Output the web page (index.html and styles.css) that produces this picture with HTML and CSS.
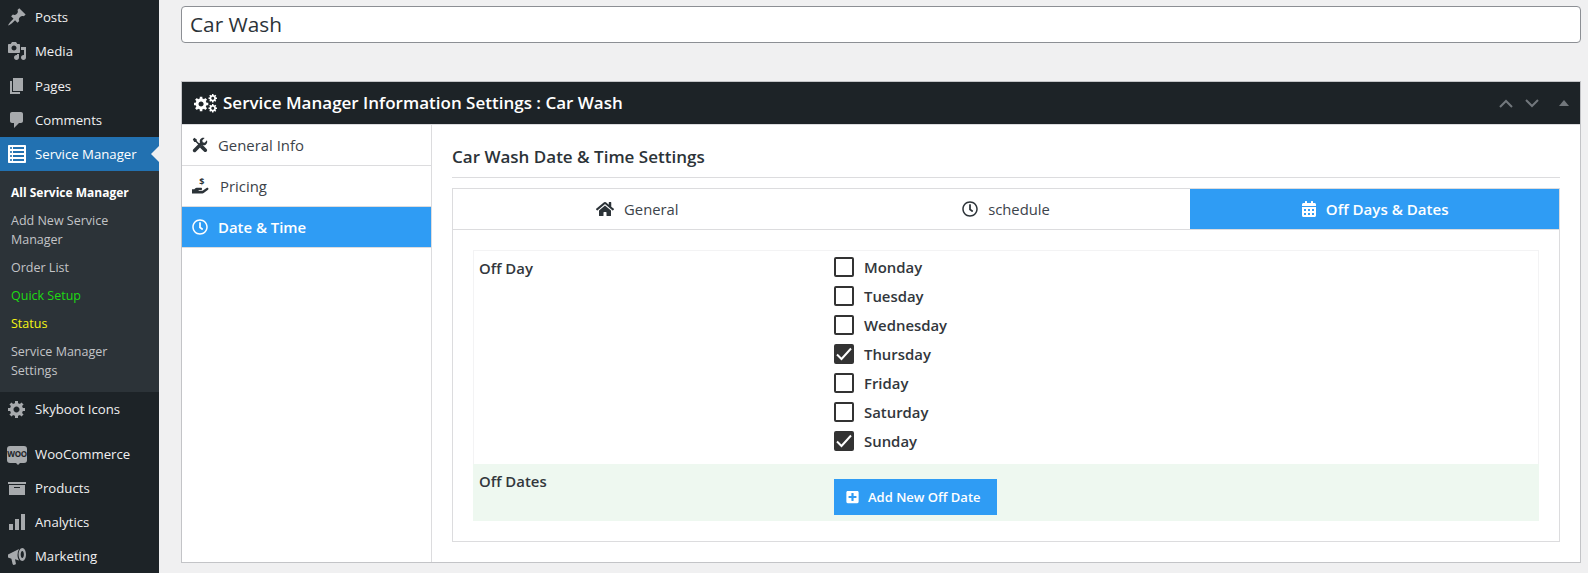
FILE: index.html
```html
<!DOCTYPE HTML>

<html>
	<head>
		<title>Car Wash</title>
		<link rel="stylesheet" href="styles.css">
	</head>
	<body>
		<svg class="defs" width="0" height="0">
			<defs>
				<symbol id="i-pin" viewBox="0 0 20 20"><path d="M10.44 3.02l1.82-1.82 6.36 6.35-1.83 1.82c-1.05-.68-2.48-.57-3.41.36l-.75.75c-.92.93-1.04 2.35-.35 3.41l-1.83 1.82-2.41-2.41-2.8 2.79c-.42.42-3.38 2.71-3.8 2.29s1.86-3.39 2.28-3.81l2.79-2.79L4.1 9.36l1.83-1.82c1.05.69 2.48.57 3.4-.36l.75-.75c.93-.92 1.05-2.35.36-3.41z"/></symbol>
				<symbol id="i-media" viewBox="0 0 20 20"><path d="M13 11V4c0-.55-.45-1-1-1h-1.67L9 1H5L3.67 3H2c-.55 0-1 .45-1 1v7c0 .55.45 1 1 1h10c.55 0 1-.45 1-1zM7 4.500c1.380 0 2.500 1.120 2.500 2.500S8.380 9.500 7 9.500 4.500 8.380 4.500 7 5.620 4.500 7 4.500zM14 6h5v10.500c0 1.380-1.120 2.500-2.500 2.500S14 17.880 14 16.500s1.120-2.500 2.500-2.500c.17 0 .34.02.5.05V9h-3V6zm-4 8.050V13h2v3.500c0 1.380-1.120 2.500-2.500 2.500S7 17.880 7 16.500 8.120 14 9.500 14c.17 0 .34.02.5.05z"/></symbol>
				<symbol id="i-page" viewBox="0 0 20 20"><path d="M6 15V2h10v13H6zm-1 1h8v2H3V5h2v11z"/></symbol>
				<symbol id="i-comment" viewBox="0 0 20 20"><path d="M5 2h9c1.100 0 2 .9 2 2v7c0 1.100-.9 2-2 2h-2l-5 5v-5H5c-1.100 0-2-.9-2-2V4c0-1.100.9-2 2-2z"/></symbol>
				<symbol id="i-list" viewBox="0 0 20 20"><path d="M2 19h16c.55 0 1-.45 1-1V2c0-.55-.45-1-1-1H2c-.55 0-1 .45-1 1v16c0 .55.45 1 1 1zM4 3c.55 0 1 .45 1 1s-.45 1-1 1-1-.45-1-1 .45-1 1-1zm13 0v2H6V3h11zM4 7c.55 0 1 .45 1 1s-.45 1-1 1-1-.45-1-1 .45-1 1-1zm13 0v2H6V7h11zM4 11c.55 0 1 .45 1 1s-.45 1-1 1-1-.45-1-1 .45-1 1-1zm13 0v2H6v-2h11zM4 15c.55 0 1 .45 1 1s-.45 1-1 1-1-.45-1-1 .45-1 1-1zm13 0v2H6v-2h11z"/></symbol>
				<symbol id="i-gear" viewBox="0 0 20 20"><path d="M18 12h-2.180c-.17.7-.44 1.350-.81 1.930l1.540 1.540-2.100 2.100-1.540-1.540c-.58.36-1.230.63-1.910.79V19H8v-2.180c-.68-.16-1.330-.43-1.910-.79l-1.540 1.540-2.120-2.120 1.540-1.540c-.36-.58-.63-1.230-.79-1.910H1V9.030h2.170c.16-.7.44-1.350.8-1.940L2.430 5.550l2.100-2.100 1.540 1.540c.58-.37 1.240-.64 1.930-.81V2h3v2.180c.68.16 1.330.43 1.910.79l1.540-1.540 2.120 2.120-1.540 1.540c.36.59.64 1.240.8 1.940H18V12zm-8.500 1.500c1.660 0 3-1.340 3-3s-1.340-3-3-3-3 1.340-3 3 1.340 3 3 3z"/></symbol>
				<symbol id="i-archive" viewBox="0 0 20 20"><path d="M19 4v2H1V4h18zM2 7h16v10H2V7zm11 3V9H7v1h6z"/></symbol>
				<symbol id="i-chart" viewBox="0 0 20 20"><path d="M18 18V2h-4v16h4zm-6 0V7H8v11h4zm-6 0v-6H2v6h4z"/></symbol>
				<symbol id="i-mega" viewBox="0 0 20 20"><path d="M1 8.500l11-5.500c-1 2-1.500 4-1.500 6s.6 4 1.700 5.500L8 13.300l.9 4.200c.1.600-.2 1-.8 1.100l-1.300.3c-.6.1-1-.2-1.200-.8l-1.200-5.400L1 11.500z"/><path fill-rule="evenodd" d="M15.300 2c2 0 3.700 2.900 3.700 6.500S17.300 15 15.300 15s-3.700-2.900-3.700-6.500S13.300 2 15.300 2zm0 3c-.9 0-1.600 1.600-1.600 3.500s.7 3.500 1.600 3.500 1.600-1.600 1.600-3.500-.7-3.500-1.600-3.500z"/></symbol>
				<symbol id="i-clock" viewBox="0 0 512 512"><path d="M256 8C119 8 8 119 8 256s111 248 248 248 248-111 248-248S393 8 256 8zm0 448c-110.500 0-200-89.500-200-200S145.500 56 256 56s200 89.500 200 200-89.500 200-200 200zm61.800-104.400l-84.900-61.700c-3.100-2.300-4.900-5.900-4.900-9.700V116c0-6.600 5.400-12 12-12h32c6.600 0 12 5.400 12 12v141.700l66.800 48.600c5.400 3.900 6.500 11.400 2.600 16.800L334.600 349c-3.900 5.300-11.400 6.500-16.800 2.600z"/></symbol>
				<symbol id="i-home" viewBox="0 0 576 512"><path d="M280.370 148.260L96 300.110V464a16 16 0 0 0 16 16l112.060-.29a16 16 0 0 0 15.920-16V368a16 16 0 0 1 16-16h64a16 16 0 0 1 16 16v95.640a16 16 0 0 0 16 16.050L464 480a16 16 0 0 0 16-16V300L295.670 148.260a12.190 12.190 0 0 0-15.300 0zM571.600 251.470L488 182.560V44.050a12 12 0 0 0-12-12h-56a12 12 0 0 0-12 12v72.610L318.470 43a48 48 0 0 0-61 0L4.340 251.470a12 12 0 0 0-1.600 16.900l25.500 31A12 12 0 0 0 45.150 301l235.220-193.740a12.190 12.190 0 0 1 15.300 0L530.900 301a12 12 0 0 0 16.900-1.600l25.500-31a12 12 0 0 0-1.700-16.930z"/></symbol>
				<symbol id="i-cal" viewBox="0 0 448 512"><path d="M0 464c0 26.500 21.500 48 48 48h352c26.500 0 48-21.500 48-48V192H0v272zm320-196c0-6.600 5.400-12 12-12h40c6.600 0 12 5.400 12 12v40c0 6.600-5.400 12-12 12h-40c-6.600 0-12-5.400-12-12v-40zm0 128c0-6.600 5.400-12 12-12h40c6.600 0 12 5.400 12 12v40c0 6.600-5.400 12-12 12h-40c-6.600 0-12-5.400-12-12v-40zM192 268c0-6.600 5.400-12 12-12h40c6.600 0 12 5.400 12 12v40c0 6.600-5.400 12-12 12h-40c-6.600 0-12-5.400-12-12v-40zm0 128c0-6.600 5.400-12 12-12h40c6.600 0 12 5.400 12 12v40c0 6.600-5.400 12-12 12h-40c-6.600 0-12-5.400-12-12v-40zM64 268c0-6.600 5.400-12 12-12h40c6.600 0 12 5.400 12 12v40c0 6.600-5.400 12-12 12H76c-6.600 0-12-5.400-12-12v-40zm0 128c0-6.600 5.400-12 12-12h40c6.600 0 12 5.400 12 12v40c0 6.600-5.400 12-12 12H76c-6.600 0-12-5.400-12-12v-40zM400 64h-48V16c0-8.800-7.200-16-16-16h-32c-8.800 0-16 7.200-16 16v48H160V16c0-8.800-7.200-16-16-16h-32c-8.800 0-16 7.200-16 16v48H48C21.500 64 0 85.500 0 112v48h448v-48c0-26.500-21.500-48-48-48z"/></symbol>
				<symbol id="i-plus" viewBox="0 0 448 512"><path d="M400 32H48C21.500 32 0 53.500 0 80v352c0 26.500 21.500 48 48 48h352c26.500 0 48-21.500 48-48V80c0-26.500-21.500-48-48-48zm-32 252c0 6.600-5.400 12-12 12h-92v92c0 6.600-5.400 12-12 12h-56c-6.600 0-12-5.400-12-12v-92H92c-6.600 0-12-5.400-12-12v-56c0-6.600 5.400-12 12-12h92v-92c0-6.600 5.400-12 12-12h56c6.600 0 12 5.400 12 12v92h92c6.600 0 12 5.400 12 12v56z"/></symbol>
				<symbol id="i-tools" viewBox="0 0 20 20"><path d="M2.800 1L6 3.200V5l5.600 5.600-1.400 1.400L4.600 6.400H2.900L1 3z"/><path d="M13 9.800l5.200 5.200c.9.900.9 2.300 0 3.200s-2.300.9-3.200 0L9.800 13z"/><path d="M18.700 4.200l-2.900 2.900-2.400-.5-.5-2.400L15.800 1.300c-2-.8-4.300-.2-5.400 1.600-.8 1.200-.9 2.700-.4 4L1.700 15.200c-.9.900-.9 2.200 0 3.100s2.200.9 3.100 0l8.300-8.300c1.300.5 2.800.4 4-.4 1.800-1.100 2.400-3.400 1.600-5.400z"/></symbol>
				<symbol id="i-hand" viewBox="0 0 20 20"><path d="M0 13.500h2.600c1-.9 2.200-1.500 3.500-1.500h3.700c.9 0 1.400.5 1.400 1.200 0 .8-.6 1.300-1.400 1.300H7.400v.8h4.300l4.500-3c.7-.4 1.500-.3 1.900.2.400.6.300 1.300-.3 1.800l-4.800 3.600c-.4.300-.8.400-1.300.4H0z"/><text class="iconDollar" x="8" y="9">$</text></symbol>
			</defs>
		</svg>

		<div class="wrap">
			<ul class="menu">
				<li class="menuItem"><svg class="menuIcon"><use href="#i-pin"/></svg>Posts</li>
				<li class="menuItem"><svg class="menuIcon"><use href="#i-media"/></svg>Media</li>
				<li class="menuItem"><svg class="menuIcon"><use href="#i-page"/></svg>Pages</li>
				<li class="menuItem"><svg class="menuIcon"><use href="#i-comment"/></svg>Comments</li>
				<li class="menuItem current"><svg class="menuIcon"><use href="#i-list"/></svg>Service Manager</li>
				<li class="subMenu">
					<div class="subItem subCurrent">All Service Manager</div>
					<div class="subItem">Add New Service Manager</div>
					<div class="subItem">Order List</div>
					<div class="subItem subGreen">Quick Setup</div>
					<div class="subItem subYellow">Status</div>
					<div class="subItem">Service Manager Settings</div>
				</li>
				<li class="menuItem"><svg class="menuIcon"><use href="#i-gear"/></svg>Skyboot Icons</li>
				<li class="menuItem menuGap"><span class="wooIcon">woo</span>WooCommerce</li>
				<li class="menuItem"><svg class="menuIcon"><use href="#i-archive"/></svg>Products</li>
				<li class="menuItem"><svg class="menuIcon"><use href="#i-chart"/></svg>Analytics</li>
				<li class="menuItem"><svg class="menuIcon"><use href="#i-mega"/></svg>Marketing</li>
			</ul>

			<div class="content">
				<div class="titleBox">Car Wash</div>

				<div class="metaBox">
					<div class="metaHead">
						<svg class="cogs" viewBox="0 0 24 20"><use href="#i-gear" x="-1" y="2" width="17" height="17"/><use href="#i-gear" x="14" y="0" width="10" height="10"/><use href="#i-gear" x="14" y="10" width="10" height="10"/></svg>
						<span class="metaTitle">Service Manager Information Settings : Car Wash</span>
						<svg class="arrow" viewBox="0 0 14 9"><path d="M1 8l6-6 6 6"/></svg>
						<svg class="arrow" viewBox="0 0 14 9"><path d="M1 1l6 6 6-6"/></svg>
						<span class="toggle"></span>
					</div>
					<div class="metaBody">
						<div class="sideNav">
							<div class="navItem"><svg class="navIcon"><use href="#i-tools"/></svg>General Info</div>
							<div class="navItem"><svg class="navIcon navHand"><use href="#i-hand"/></svg>Pricing</div>
							<div class="navItem navActive"><svg class="navIcon"><use href="#i-clock"/></svg>Date &amp; Time</div>
						</div>
						<div class="panel">
							<div class="panelTitle">Car Wash Date &amp; Time Settings</div>
							<div class="tabBox">
								<div class="tabs">
									<div class="tab"><svg class="tabIcon tabHome"><use href="#i-home"/></svg>General</div>
									<div class="tab"><svg class="tabIcon"><use href="#i-clock"/></svg>schedule</div>
									<div class="tab tabActive"><svg class="tabIcon"><use href="#i-cal"/></svg>Off Days &amp; Dates</div>
								</div>
								<div class="tabBody">
									<div class="formRow">
										<div class="formLabel">Off Day</div>
										<div class="days">
											<div class="day"><span class="check"></span>Monday</div>
											<div class="day"><span class="check"></span>Tuesday</div>
											<div class="day"><span class="check"></span>Wednesday</div>
											<div class="day"><span class="check checked"><svg viewBox="0 0 20 20"><path d="M3 10.500l4.500 4.500L17 4.500"/></svg></span>Thursday</div>
											<div class="day"><span class="check"></span>Friday</div>
											<div class="day"><span class="check"></span>Saturday</div>
											<div class="day"><span class="check checked"><svg viewBox="0 0 20 20"><path d="M3 10.500l4.500 4.500L17 4.500"/></svg></span>Sunday</div>
										</div>
									</div>
									<div class="formRow formGreen">
										<div class="formLabel">Off Dates</div>
										<div class="formField">
											<button class="addButton"><svg class="addIcon"><use href="#i-plus"/></svg>Add New Off Date</button>
										</div>
									</div>
								</div>
							</div>
						</div>
					</div>
				</div>
			</div>
		</div>
	</body>
</html>
```

FILE: styles.css
```css
html, body
{
	margin: 0;
	height: 573px;
	overflow: hidden;
}
body
{
	background-color: #f0f0f1;
	color: #2c3338;
	font-family: "Open Sans", "Noto Sans", sans-serif;
	font-size: 13px;
}
svg.defs
{
	display: block;
	height: 0;
}
div.wrap
{
	display: flex;
	height: 573px;
}

/* admin menu */
ul.menu
{
	list-style: none;
	margin: 0;
	padding: 0;
	width: 159px;
	flex: none;
	background-color: #1d2327;
	color: #f0f0f1;
}
li.menuItem
{
	display: flex;
	align-items: center;
	height: 34px;
	font-size: 13.2px;
}
li.menuItem:nth-child(3)
{
	height: 35px;
}
li.menuGap
{
	margin-top: 11px;
}
li.current
{
	position: relative;
	background-color: #2271b1;
	color: white;
}
li.current::after
{
	content: "";
	position: absolute;
	right: 0;
	top: 9px;
	border: 8px solid transparent;
	border-right-color: #f0f0f1;
	border-left-width: 0;
}
svg.menuIcon
{
	width: 20px;
	height: 20px;
	margin: 0 8px 0 7px;
	fill: #a7aaad;
	flex: none;
}
li.current svg.menuIcon
{
	fill: white;
}
span.wooIcon
{
	position: relative;
	width: 20px;
	height: 17px;
	margin: 0 8px 0 7px;
	flex: none;
	background-color: #a7aaad;
	border-radius: 3px;
	color: #1d2327;
	font-size: 8px;
	font-weight: 700;
	line-height: 16px;
	text-align: center;
	text-transform: uppercase;
	letter-spacing: -0.4px;
}
span.wooIcon::after
{
	content: "";
	position: absolute;
	left: 9px;
	bottom: -2px;
	border: 2px solid transparent;
	border-top-color: #a7aaad;
	border-bottom-width: 0;
}
li.subMenu
{
	background-color: #2c3338;
	padding: 7px 0 8px;
}
div.subItem
{
	color: #c3c4c7;
	font-size: 12.5px;
	line-height: 19px;
	padding: 4.5px 12px 4.5px 11px;
}
div.subCurrent
{
	color: white;
	font-size: 12px;
	font-weight: 700;
}
div.subGreen
{
	color: #1edb12;
}
div.subYellow
{
	color: #f5f513;
}

/* main column */
div.content
{
	flex: 1;
	padding: 6px 7px 0 22px;
}
div.titleBox
{
	height: 35px;
	line-height: 35px;
	padding: 0 8px;
	background-color: white;
	border: 1px solid #8c8f94;
	border-radius: 4px;
	font-size: 20.8px;
}
div.metaBox
{
	margin-top: 38px;
	height: 480px;
	border: 1px solid #c3c4c7;
	background-color: white;
	display: flex;
	flex-direction: column;
}
div.metaHead
{
	display: flex;
	align-items: center;
	height: 42px;
	flex: none;
	padding: 0 11px 0 12px;
	background-color: #1d2327;
	color: white;
}
svg.cogs
{
	width: 24px;
	height: 20px;
	margin-right: 5px;
	fill: white;
}
span.metaTitle
{
	flex: 1;
	padding-bottom: 2px;
	font-size: 17px;
	font-weight: 600;
}
svg.arrow
{
	width: 14px;
	height: 9px;
	margin-right: 12px;
	fill: none;
	stroke: #72777c;
	stroke-width: 2;
}
span.toggle
{
	margin-left: 8px;
	border: 5px solid transparent;
	border-top-width: 0;
	border-bottom: 6px solid #72777c;
}
div.metaBody
{
	flex: 1;
	display: flex;
	border-top: 1px solid #dcdcde;
}

/* left nav */
div.sideNav
{
	width: 249px;
	flex: none;
	border-right: 1px solid #dcdcde;
}
div.navItem
{
	display: flex;
	align-items: center;
	height: 40px;
	padding-left: 10px;
	border-bottom: 1px solid #dcdcde;
	font-size: 14.9px;
	color: #3c434a;
}
div.navActive
{
	background-color: #2f9cf4;
	color: white;
	font-weight: 600;
}
svg.navIcon
{
	width: 16px;
	height: 16px;
	margin-right: 10px;
	fill: #2c3338;
	flex: none;
}
svg.navHand
{
	width: 18px;
	height: 18px;
	margin-right: 10px;
}
div.navActive svg.navIcon
{
	fill: white;
}
text.iconDollar
{
	font-size: 10px;
	font-weight: 700;
}

/* right panel */
div.panel
{
	flex: 1;
	padding: 20px 20px 0 20px;
}
div.panelTitle
{
	height: 32px;
	border-bottom: 1px solid #dcdcde;
	font-size: 17px;
	font-weight: 600;
	line-height: 24px;
	color: #2c3338;
}
div.tabBox
{
	margin-top: 10px;
	border: 1px solid #dcdcde;
}
div.tabs
{
	display: flex;
	height: 40px;
	border-bottom: 1px solid #dcdcde;
}
div.tab
{
	flex: 1;
	display: flex;
	align-items: center;
	justify-content: center;
	font-size: 14.8px;
	color: #3c434a;
}
div.tabActive
{
	background-color: #2f9cf4;
	color: white;
	font-size: 15.1px;
	font-weight: 600;
}
svg.tabIcon
{
	width: 16px;
	height: 16px;
	margin-right: 10px;
	fill: #2c3338;
	flex: none;
}
svg.tabHome
{
	width: 18px;
}
div.tabActive svg.tabIcon
{
	margin-right: 9px;
	fill: white;
}
div.tabBody
{
	padding: 20px;
}
div.formRow
{
	display: flex;
	border: 1px solid #f3f3f4;
	border-bottom: none;
	height: 213px;
	font-size: 14.9px;
	font-weight: 600;
	color: #32373c;
}
div.formGreen
{
	height: 57px;
	border: none;
	background-color: #eef8f0;
}
div.formLabel
{
	width: 355px;
	flex: none;
	padding: 5px 0 0 5px;
	line-height: 24px;
}
div.formGreen div.formLabel
{
	padding-left: 6px;
	width: 355px;
}
div.days
{
	padding-top: 1px;
}
div.day
{
	display: flex;
	align-items: center;
	height: 29px;
}
span.check
{
	width: 20px;
	height: 20px;
	box-sizing: border-box;
	margin-right: 10px;
	border: 2px solid #333;
	border-radius: 2px;
	background-color: white;
}
span.checked
{
	background-color: #333;
	position: relative;
}
span.checked svg
{
	position: absolute;
	left: -2px;
	top: -2px;
	width: 20px;
	height: 20px;
	fill: none;
	stroke: white;
	stroke-width: 2;
}
div.formField
{
	padding-top: 15px;
}
button.addButton
{
	display: flex;
	align-items: center;
	width: 163px;
	height: 36px;
	padding: 0 0 0 12px;
	border: none;
	background-color: #2f9cf4;
	color: white;
	font-family: inherit;
	font-size: 13px;
	font-weight: 600;
}
svg.addIcon
{
	width: 13px;
	height: 14px;
	margin-right: 9px;
	fill: white;
}
```
